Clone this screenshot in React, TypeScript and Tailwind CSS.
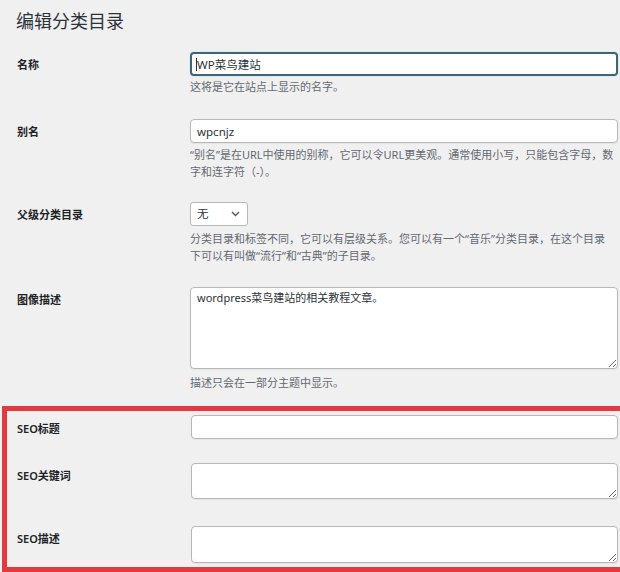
import type { ReactNode } from 'react'

// One row of the form table: bold label on the left, field on the right
function Row({ label, children, className = '', labelPad = 'pt-[5px]', cols = 'grid-cols-[173px_1fr]' }: {
  label: string
  children: ReactNode
  className?: string
  labelPad?: string
  cols?: string
}) {
  return (
    <div className={`grid ${cols} ${className}`}>
      <div className={`${labelPad} text-[11px] leading-[16px] font-semibold text-[#1d2327]`}>{label}</div>
      <div>{children}</div>
    </div>
  )
}

function Help({ children, className = '' }: { children: ReactNode; className?: string }) {
  return (
    <p className={`whitespace-nowrap text-[11px] leading-[17px] text-[#646970] ${className}`}>{children}</p>
  )
}

const field =
  'block w-full rounded-[4px] border border-[#b6b7b9] bg-white px-[6px] text-[11.5px] text-[#2c3338] shadow-[0_1px_1px_rgba(0,0,0,0.05)] outline-none'

export default function App() {
  return (
    <div className="h-[572px] w-[620px] overflow-hidden bg-[#f0f0f1] font-['Noto_Sans','Noto_Sans_CJK_SC',sans-serif] text-[#1d2327]">
      <h1 className="pl-[16px] pt-[8px] text-[18px] leading-[26px] font-normal text-[#2c3338]">编辑分类目录</h1>

      <div className="pl-[17px] pr-[2px]">
        {/* 名称 */}
        <Row label="名称" className="mt-[18px]">
          <div className="relative">
            <input
              readOnly
              value="WP菜鸟建站"
              className="block h-[24px] w-full rounded-[4px] border-2 border-[#3e6576] bg-white px-[5px] text-[11.5px] text-[#2c3338] shadow-[0_0_0_1px_#dbe9ee] outline-none"
            />
            <span className="absolute left-[6px] top-[6px] h-[13px] w-px bg-[#2c3338]" />
          </div>
          <Help className="mt-[2px]">这将是它在站点上显示的名字。</Help>
        </Row>

        {/* 别名 */}
        <Row label="别名" className="mt-[24px]">
          <input readOnly value="wpcnjz" className={`${field} h-[24px]`} />
          <Help className="mt-[3px]">
            “别名”是在URL中使用的别称，它可以令URL更美观。通常使用小写，只能包含字母，数
            <br />
            字和连字符（-）。
          </Help>
        </Row>

        {/* 父级分类目录 */}
        <Row label="父级分类目录" className="mt-[22px]">
          <div className="flex h-[24px] w-[58px] items-center justify-between rounded-[3px] border border-[#b6b7b9] bg-white pl-[6px] pr-[7px] text-[11.5px] text-[#2c3338]">
            <span>无</span>
            <svg width="9" height="6" viewBox="0 0 9 6" fill="none" stroke="#50575e" strokeWidth="1.4">
              <polyline points="1,1 4.5,4.5 8,1" />
            </svg>
          </div>
          <Help className="mt-[4px]">
            分类目录和标签不同，它可以有层级关系。您可以有一个“音乐”分类目录，在这个目录
            <br />
            下可以有叫做“流行”和“古典”的子目录。
          </Help>
        </Row>

        {/* 图像描述 */}
        <Row label="图像描述" className="mt-[23px]">
          <textarea
            readOnly
            value="wordpress菜鸟建站的相关教程文章。"
            className={`${field} h-[82px] py-[2px] !text-[11px] leading-[16px]`}
          />
          <Help className="mt-[5px]">描述只会在一部分主题中显示。</Help>
        </Row>
      </div>

      {/* SEO fields, outlined in red */}
      <div className="ml-[2px] mt-[15px] border-[5px] border-r-0 border-[#e13b3f] pb-[4px] pl-[10px] pr-[2px] pt-[4px]">
        <Row label="SEO标题" cols="grid-cols-[174px_1fr]" labelPad="pt-[6px]">
          <input readOnly className={`${field} h-[24px]`} />
        </Row>
        <Row label="SEO关键词" cols="grid-cols-[174px_1fr]" className="mt-[24px]">
          <textarea readOnly className={`${field} h-[36px]`} />
        </Row>
        <Row label="SEO描述" cols="grid-cols-[174px_1fr]" className="mt-[27px]">
          <textarea readOnly className={`${field} h-[37px]`} />
        </Row>
      </div>
    </div>
  )
}
